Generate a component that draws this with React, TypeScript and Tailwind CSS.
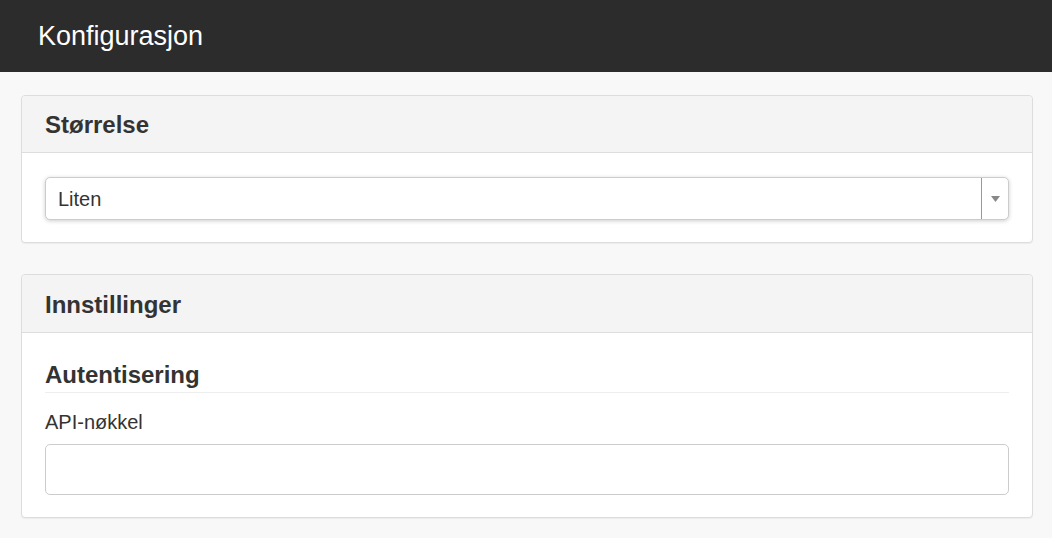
import React from "react";

export default function App() {
  return (
    <div className="min-h-[538px] bg-[#f8f8f8] text-[#333] font-['Liberation_Sans',Arial,sans-serif]">
      <div className="h-[72px] bg-[#2c2c2c] flex items-center px-[38px]">
        <h1 className="text-white text-[27px] leading-none">Konfigurasjon</h1>
      </div>

      <div className="pl-[21px] pr-[19px] pt-[23px] flex flex-col gap-[31px]">
        <div className="bg-white border border-[#dddddd] rounded-[4px] shadow-[0_1px_1px_rgba(0,0,0,0.05)]">
          <div className="h-[57px] bg-[#f4f4f4] border-b border-[#dddddd] rounded-t-[4px] flex items-center px-[23px] pt-[2px]">
            <h2 className="text-[24px] font-bold text-[#333]">Størrelse</h2>
          </div>
          <div className="px-[23px] pt-[24px] pb-[22px]">
            <div className="h-[43px] flex items-stretch bg-white border border-[#cccccc] rounded-[5px] shadow-[0_1px_4px_rgba(0,0,0,0.2)]">
              <div className="flex-1 flex items-center px-[12px] text-[20px] text-[#333]">Liten</div>
              <div className="w-[27px] border-l border-[#999] flex items-center justify-center">
                <svg width="9" height="6" viewBox="0 0 9 6">
                  <path d="M0 0 L9 0 L4.5 6 Z" fill="#888" />
                </svg>
              </div>
            </div>
          </div>
        </div>

        <div className="bg-white border border-[#dddddd] rounded-[4px] shadow-[0_1px_1px_rgba(0,0,0,0.05)]">
          <div className="h-[58px] bg-[#f4f4f4] border-b border-[#dddddd] rounded-t-[4px] flex items-center px-[23px] pt-[2px]">
            <h2 className="text-[24px] font-bold text-[#333]">Innstillinger</h2>
          </div>
          <div className="px-[23px] pt-[27px] pb-[22px]">
            <h3 className="text-[24px] font-bold text-[#333] leading-[30px] pb-[2px] border-b border-[#eeeeee]">Autentisering</h3>
            <label className="block mt-[16px] text-[20px] leading-[26px] text-[#333]">API-nøkkel</label>
            <input
              type="text"
              className="block w-full mt-[9px] h-[51px] border border-[#cccccc] rounded-[5px] bg-white px-3 text-[20px] outline-none"
            />
          </div>
        </div>
      </div>
    </div>
  );
}
